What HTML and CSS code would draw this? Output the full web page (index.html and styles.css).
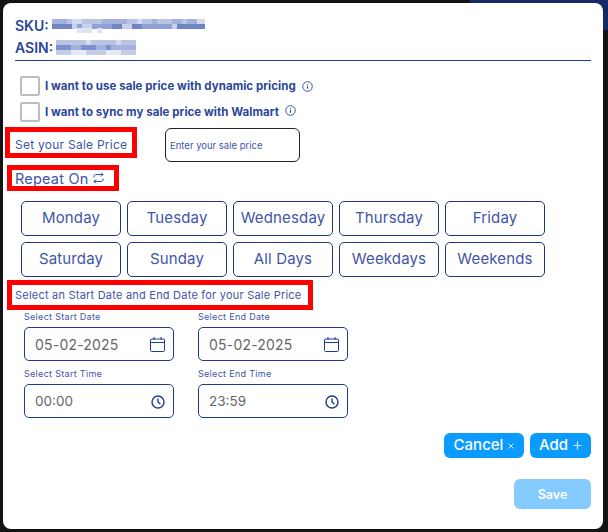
FILE: index.html
```html
<!DOCTYPE html>
<html lang="en">
<head>
    <meta charset="UTF-8">
    <meta name="viewport" content="width=device-width, initial-scale=1.0">
    <title>Sale Price</title>
    <link rel="stylesheet" href="styles.css">
</head>
<body>
    <div class="backdrop-band"></div>
    <div class="modal">
        <div class="product-line">
            <span>SKU:</span>
            <svg class="blur" width="153" height="15" viewBox="0 0 153 15" shape-rendering="crispEdges" fill="none" stroke-width="5">
                <path stroke="#a3b1dc" d="M0 3h15M50 3h25M100 3h5M120 3h10M135 3h10"/>
                <path stroke="#b9c4e5" d="M15 3h5M30 3h20M75 3h10M90 3h10M105 3h15M130 3h5"/>
                <path stroke="#d3daef" d="M20 3h10M85 3h5M145 3h8"/>
                <path stroke="#7085c6" d="M0 8h20M60 8h10M125 8h28M80 8h10"/>
                <path stroke="#8fa0d5" d="M25 8h5M40 8h20M90 8h30"/>
                <path stroke="#c9d1ea" d="M20 8h5M30 8h10M70 8h10M120 8h5"/>
                <path stroke="#dfe4f3" d="M25 12.5h15M45 12.5h5"/>
            </svg>
        </div>
        <div class="product-line">
            <span>ASIN:</span>
            <svg class="blur" width="80" height="15" viewBox="0 0 80 15" shape-rendering="crispEdges" fill="none" stroke-width="5">
                <path stroke="#b9c4e4" d="M0 2.5h30M35 2.5h25M65 2.5h15"/>
                <path stroke="#d3daef" d="M30 2.5h5M60 2.5h5"/>
                <path stroke="#7d90cb" d="M0 7.5h15M25 7.5h15M50 7.5h5"/>
                <path stroke="#a4b2dc" d="M15 7.5h10M40 7.5h10M55 7.5h25"/>
                <path stroke="#c3cce8" d="M0 12.5h15M30 12.5h20M65 12.5h15"/>
                <path stroke="#e6eaf6" d="M15 12.5h15M50 12.5h15"/>
            </svg>
        </div>
        <div class="divider"></div>

        <div class="check-list">
            <label class="check-row">
                <span class="check-box"></span>
                <span class="check-text">I want to use sale price with dynamic pricing</span>
                <svg class="info-icon" width="11" height="11" viewBox="0 0 12 12" fill="none" stroke="#2a469a"><circle cx="6" cy="6" r="5.2"/><path d="M6 5.3v3.2M6 3.2v1" stroke-width="1.2"/></svg>
            </label>
            <label class="check-row">
                <span class="check-box"></span>
                <span class="check-text">I want to sync my sale price with Walmart</span>
                <svg class="info-icon" width="11" height="11" viewBox="0 0 12 12" fill="none" stroke="#2a469a"><circle cx="6" cy="6" r="5.2"/><path d="M6 5.3v3.2M6 3.2v1" stroke-width="1.2"/></svg>
            </label>
        </div>

        <div class="sale-row">
            <div class="marked marked-sale">Set your Sale Price</div>
            <input class="sale-input" type="text" placeholder="Enter your sale price">
        </div>

        <div class="marked marked-repeat">
            Repeat On
            <svg width="11" height="12" viewBox="0 0 11 12" fill="none" stroke="#2a469a" stroke-width="1"><path d="M1 5.5V4.2C1 3.3 1.7 2.6 2.6 2.6H10M8 .6l2 2-2 2M10 6.5v1.3c0 .9-.7 1.6-1.6 1.6H1M3 7.4l-2 2 2 2"/></svg>
        </div>

        <div class="days">
            <button class="day">Monday</button>
            <button class="day">Tuesday</button>
            <button class="day">Wednesday</button>
            <button class="day">Thursday</button>
            <button class="day">Friday</button>
            <button class="day">Saturday</button>
            <button class="day">Sunday</button>
            <button class="day">All Days</button>
            <button class="day">Weekdays</button>
            <button class="day">Weekends</button>
        </div>

        <div class="marked marked-dates">Select an Start Date and End Date for your Sale Price</div>

        <div class="date-grid">
            <div class="field">
                <div class="field-label">Select Start Date</div>
                <div class="field-box">
                    05-02-2025
                    <svg width="15" height="15" viewBox="0 0 15 15" fill="none" stroke="#1f3d8f"><rect x=".5" y="2" width="14" height="12.5" rx="1"/><path d="M.5 5.5h14M4 0v3M11 0v3"/></svg>
                </div>
            </div>
            <div class="field">
                <div class="field-label">Select End Date</div>
                <div class="field-box">
                    05-02-2025
                    <svg width="15" height="15" viewBox="0 0 15 15" fill="none" stroke="#1f3d8f"><rect x=".5" y="2" width="14" height="12.5" rx="1"/><path d="M.5 5.5h14M4 0v3M11 0v3"/></svg>
                </div>
            </div>
            <div class="field">
                <div class="field-label">Select Start Time</div>
                <div class="field-box field-time">
                    00:00
                    <svg width="14" height="14" viewBox="0 0 14 14" fill="none" stroke="#1f3d8f" stroke-width="1.4"><circle cx="7" cy="7" r="6"/><path d="M7 3.6V7l2.4 2.2"/></svg>
                </div>
            </div>
            <div class="field">
                <div class="field-label">Select End Time</div>
                <div class="field-box field-time">
                    23:59
                    <svg width="14" height="14" viewBox="0 0 14 14" fill="none" stroke="#1f3d8f" stroke-width="1.4"><circle cx="7" cy="7" r="6"/><path d="M7 3.6V7l2.4 2.2"/></svg>
                </div>
            </div>
        </div>

        <div class="actions">
            <button class="btn btn-cancel">
                Cancel
                <svg width="6" height="6" viewBox="0 0 6 6" fill="none" stroke="#cfeaff" stroke-width="1"><path d="M.5.5l5 5M5.5.5l-5 5"/></svg>
            </button>
            <button class="btn btn-add">
                Add
                <svg width="9" height="9" viewBox="0 0 9 9" fill="none" stroke="#cfeaff" stroke-width="1.2"><path d="M4.5.5v8M.5 4.5h8"/></svg>
            </button>
        </div>
        <div class="save-row">
            <button class="btn-save">Save</button>
        </div>
    </div>
</body>
</html>
```

FILE: styles.css
```css
html, body { height: 100%; }
body { margin: 0; background: #111315; font-family: Inter, "Open Sans", sans-serif; color: #3f55a8; overflow: hidden; }
.backdrop-band { position: absolute; top: 0; left: 470px; width: 138px; height: 30px; background: #142a66; }

.modal { position: relative; box-sizing: border-box; width: 600px; height: 526px; margin: 3px 0 0 3px; padding: 11px 12px 0 12px; background: #fff; border-radius: 8px; }

.product-line { display: flex; align-items: center; height: 22px; font-size: 14px; font-weight: 600; color: #2a469a; }
.blur { margin-left: 3px; }
.divider { height: 1px; margin-top: 2px; background: #1f3d96; }

.check-list { display: flex; flex-direction: column; gap: 6px; margin: 15px 0 0 5px; }
.check-row { display: flex; align-items: center; height: 20px; }
.check-box { box-sizing: border-box; width: 20px; height: 20px; border: 2px solid #bdbdbd; border-radius: 2px; }
.check-text { margin: 0 0 1px 5px; font-size: 11.5px; font-weight: 700; letter-spacing: .05px; color: #2a469a; white-space: nowrap; }
.info-icon { margin-left: 6px; }
.check-row:last-child .info-icon { margin-bottom: 3px; }

.marked { box-sizing: border-box; display: flex; align-items: center; border: 5px solid #f00; white-space: nowrap; }

.sale-row { display: flex; align-items: flex-start; height: 35px; margin-top: 5px; }
.marked-sale { width: 132px; height: 31px; margin-left: -10px; padding: 3px 0 0 5px; font-size: 12px; letter-spacing: .25px; }
.sale-input { box-sizing: border-box; width: 135px; height: 34px; margin: 1px 0 0 28px; padding: 0 4px; border: 1px solid #222; border-radius: 6px; font-family: inherit; font-size: 9.5px; outline: none; }
.sale-input::placeholder { color: #3f55a8; opacity: 1; }

.marked-repeat { gap: 5px; width: 112px; height: 26px; margin: 3px 0 0 -8px; padding-left: 3px; font-size: 14.5px; letter-spacing: .2px; }

.days { display: grid; grid-template-columns: repeat(5, 100px); gap: 6px; margin: 10px 0 0 6px; }
.day { box-sizing: border-box; height: 35px; padding: 0 0 3px; background: #fff; border: 1.3px solid #1c3585; border-radius: 5px; font-family: inherit; font-size: 15px; letter-spacing: .15px; color: #3f55a8; }

.marked-dates { width: 306px; height: 30px; margin: 3px 0 0 -8px; padding-left: 3px; font-size: 11px; letter-spacing: .22px; }

.date-grid { display: grid; grid-template-columns: 150px 150px; column-gap: 24px; row-gap: 6px; margin-left: 9px; }
.field-label { height: 13px; margin-bottom: 4px; font-size: 9px; line-height: 13px; letter-spacing: .3px; color: #3f55a8; }
.field-box { box-sizing: border-box; display: flex; align-items: center; justify-content: space-between; height: 34px; padding: 0 8px 0 10px; border: 1px solid #1f3d8f; border-radius: 5px; font-size: 14px; letter-spacing: .2px; color: #666; }
.field-time { padding-bottom: 1px; font-size: 13.5px; letter-spacing: 0; }
.field-time svg { margin-top: 2px; }

.actions { display: flex; justify-content: flex-end; gap: 6px; margin-top: 15px; }
.btn { display: flex; align-items: center; justify-content: center; gap: 5px; height: 25px; padding: 0 0 2px; background: #0b9bff; border: 0; border-radius: 6px; font-family: inherit; font-size: 15px; font-weight: 500; color: #fff; }
.btn svg { margin-top: 2px; }
.btn-cancel { width: 80px; }
.btn-add { width: 61px; }

.save-row { display: flex; justify-content: flex-end; margin-top: 21px; }
.btn-save { width: 77px; height: 30px; padding: 0; background: #84ccff; border: 0; border-radius: 6px; font-family: inherit; font-size: 12.5px; font-weight: 600; color: #fff; }
```
